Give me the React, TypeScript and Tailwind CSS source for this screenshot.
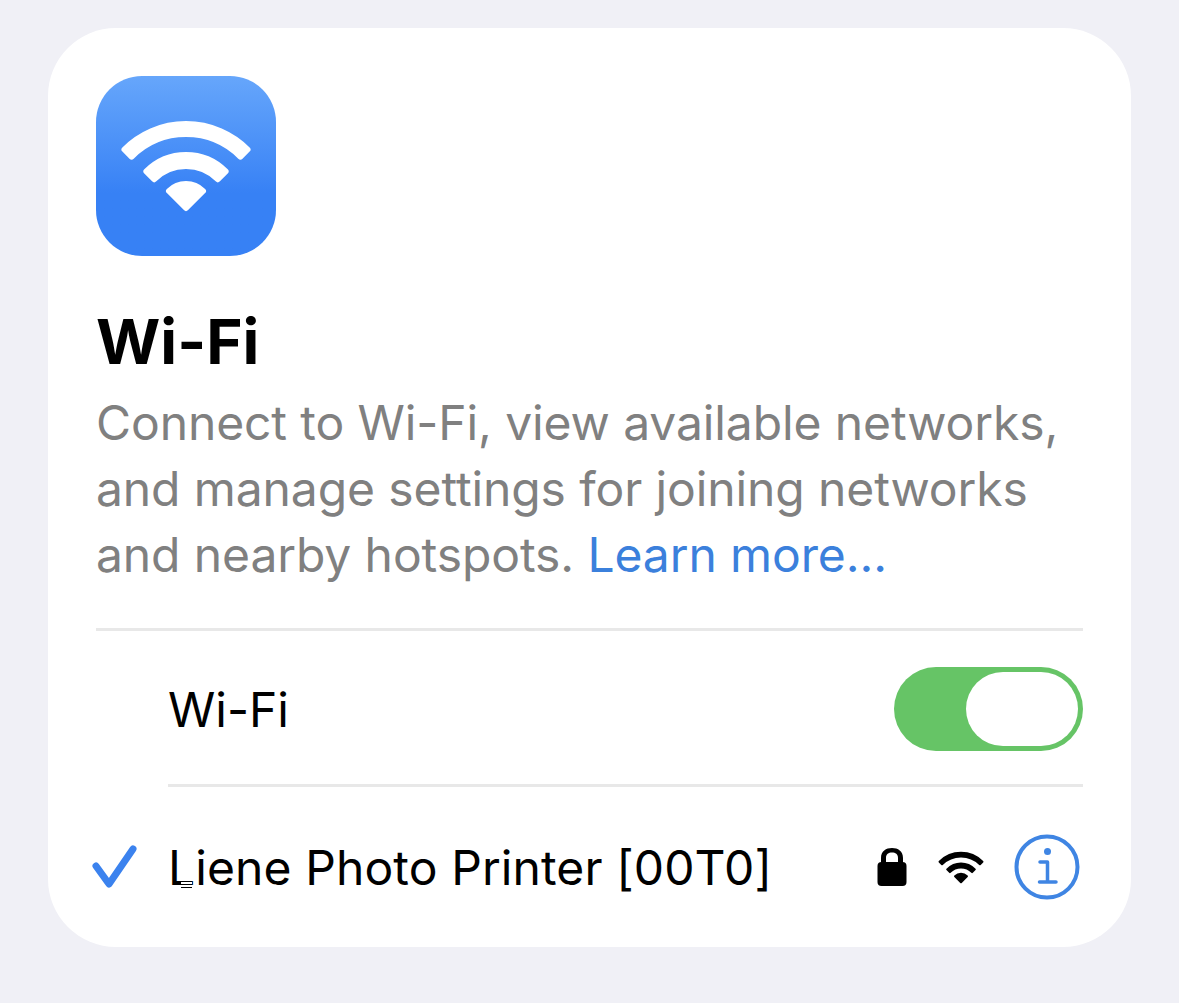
import React from 'react';

function WifiGlyph({ className }: { className?: string }) {
  // concentric bands around the tip of the fan, origin sits on the tip
  return (
    <svg viewBox="-66 -92 132 94" className={className} fill="currentColor" stroke="currentColor" strokeWidth="6" strokeLinejoin="round">
      <path d="M-61.500 -61.500 A87 87 0 0 1 61.500 -61.500 L54.400 -54.400 A77 77 0 0 0 -54.400 -54.400 Z" />
      <path d="M-39.600 -39.600 A56 56 0 0 1 39.600 -39.600 L31.800 -31.800 A45 45 0 0 0 -31.800 -31.800 Z" />
      <path d="M0 -3 L-17 -20 A24 24 0 0 1 17 -20 Z" />
    </svg>
  );
}

function App() {
  return (
    <div className="h-[1003px] bg-[#f0f0f6] pt-[28px] px-[48px] font-['Inter',sans-serif] overflow-hidden">
      <div className="w-[1083px] h-[919px] bg-white rounded-[68px] pl-[48px] pr-[48px] pt-[48px]">
        {/* app tile */}
        <div className="w-[180px] h-[180px] rounded-[46px] bg-gradient-to-b from-[#66a6fb] to-[#3781f5] to-65% flex items-start justify-center pt-[43px] text-white">
          <WifiGlyph className="w-[132px] h-[94px]" />
        </div>

        <h1 className="mt-[50px] text-[62px] leading-[72px] font-bold text-black">Wi-Fi</h1>
        <p className="mt-[12px] text-[48px] leading-[66px] text-[#808080] w-[1000px] tracking-[-0.1px]">
          Connect to Wi-Fi, view available networks,
          <br />
          and manage settings for joining networks
          <br />
          and nearby hotspots. <span className="text-[#3b80dc]">Learn more...</span>
        </p>

        <div className="mt-[40px] border-t-[3px] border-[#e8e8e8]">
          <div className="h-[156px] pt-[2px] ml-[72px] border-b-[3px] border-[#e8e8e8] flex items-center justify-between">
            <span className="mt-[2px] text-[48px] text-black">Wi-Fi</span>
            <div className="w-[189px] h-[84px] rounded-full bg-[#66c466] flex justify-end items-center pr-[5px]">
              <div className="w-[112px] h-[74px] rounded-full bg-white" />
            </div>
          </div>

          <div className="h-[160px] flex items-center">
            <svg viewBox="0 0 48 46" className="w-[48px] h-[46px] -ml-[5px] mr-[29px] text-[#3b82ee]" fill="none">
              <path d="M5 22 L18 40 L42 5" stroke="currentColor" strokeWidth="7" strokeLinecap="round" strokeLinejoin="round" />
            </svg>
            <span className="relative mt-[2px] text-[48px] text-black tracking-[0.1px]">
              Liene Photo Printer [00T0]
              {/* text cursor resting on the L */}
              <svg viewBox="0 0 11 7" className="absolute left-[13px] top-[49px] w-[11px] h-[7px]">
                <rect width="11" height="7" fill="white" />
                <path d="M0 .5 H11 M0 3.500 H11 M0 6.500 H11" stroke="black" strokeWidth="1" />
              </svg>
            </span>
            <div className="ml-auto flex items-center">
              <svg viewBox="0 0 30 40" className="w-[30px] h-[40px] text-black" fill="currentColor">
                <path d="M4 16 V11 C4 4 9 1 15 1 C21 1 26 4 26 11 V16 H21 V11 C21 7 18.500 5.500 15 5.500 C11.500 5.500 9 7 9 11 V16 Z" />
                <rect x="0.500" y="15" width="29" height="24" rx="4" />
              </svg>
              <WifiGlyph className="ml-[31px] w-[46px] h-[33px] text-black" />
              <svg viewBox="0 0 66 66" className="ml-[30px] w-[66px] h-[66px] mr-[3px] text-[#3f85e3]" fill="none">
                <circle cx="33" cy="33" r="30.500" stroke="currentColor" strokeWidth="4" />
                <circle cx="33.500" cy="17.500" r="3.500" fill="currentColor" />
                <path d="M26 28 H33.500 V48 M25.500 48 H42" stroke="currentColor" strokeWidth="3.500" strokeLinecap="round" strokeLinejoin="round" />
              </svg>
            </div>
          </div>
        </div>
      </div>
    </div>
  );
}

export default App;
